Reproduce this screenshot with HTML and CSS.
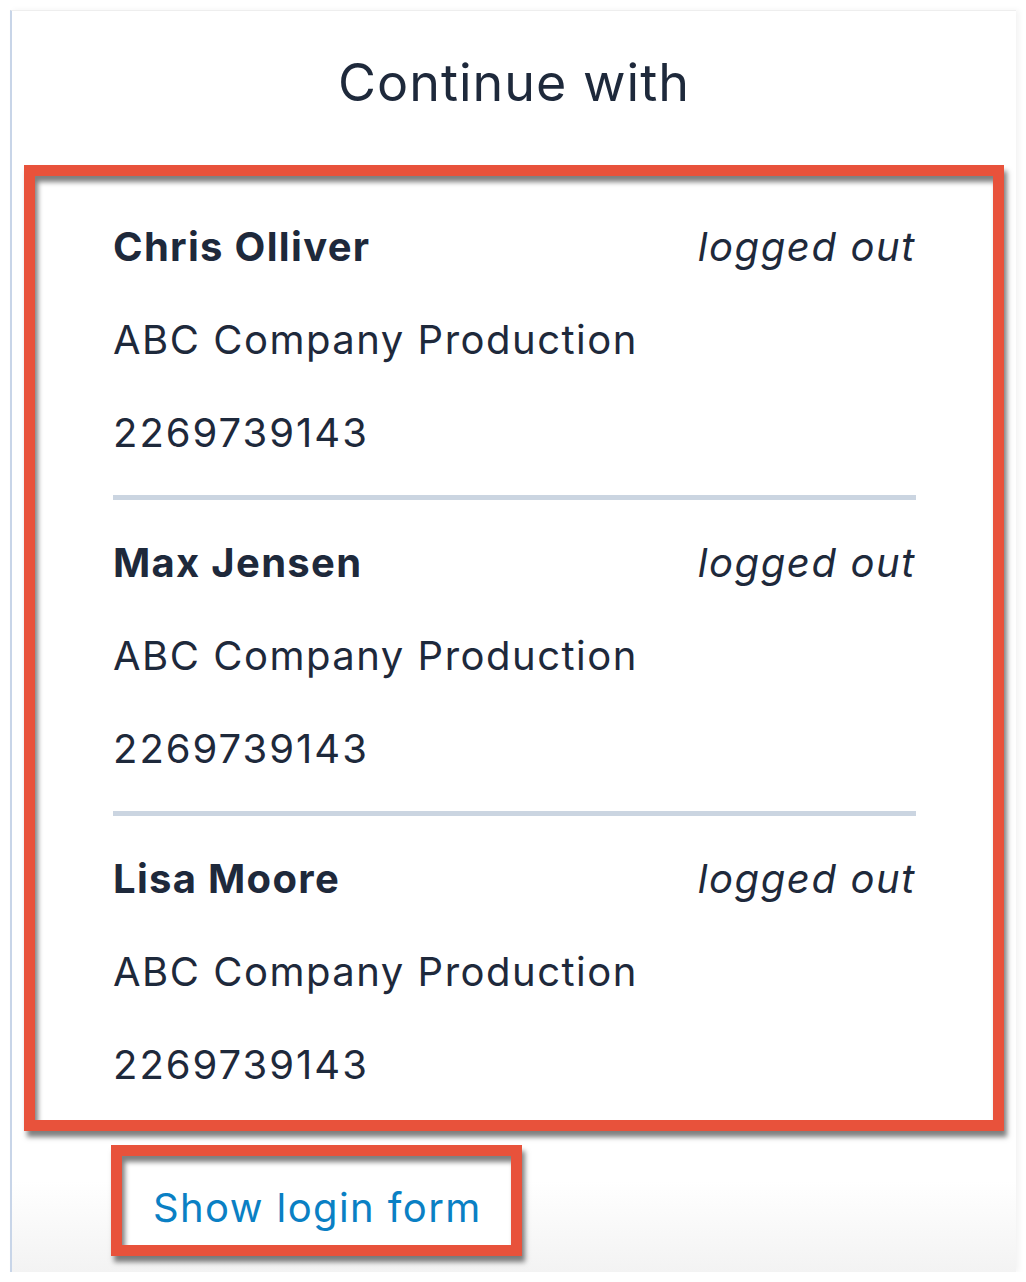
FILE: index.html
```html
<!DOCTYPE html>
<html lang="en">
<head>
<meta charset="utf-8">
<title>Continue with</title>
<link rel="stylesheet" href="styles.css">
</head>
<body>
<div class="card">
  <h1 class="title">Continue with</h1>
  <div class="accounts annot">
    <div class="account">
      <div class="row"><span class="name">Chris Olliver</span><span class="status">logged out</span></div>
      <div class="line">ABC Company Production</div>
      <div class="line phone">2269739143</div>
    </div>
    <div class="account">
      <div class="row"><span class="name">Max Jensen</span><span class="status">logged out</span></div>
      <div class="line">ABC Company Production</div>
      <div class="line phone">2269739143</div>
    </div>
    <div class="account">
      <div class="row"><span class="name">Lisa Moore</span><span class="status">logged out</span></div>
      <div class="line">ABC Company Production</div>
      <div class="line phone">2269739143</div>
    </div>
  </div>
  <div class="login annot">
    <a class="login-link" href="#">Show login form</a>
  </div>
</div>
</body>
</html>
```

FILE: styles.css
```css
html, body {
  margin: 0;
  padding: 0;
  background: #ffffff;
}

body {
  font-family: Inter, "Noto Sans", "Liberation Sans", sans-serif;
  color: #1e293b;
}

.card {
  margin: 10px 10px 0 10px;
  width: 1006px;
  height: 1262px;
  box-sizing: border-box;
  border-left: 2px solid #c8d5e8;
  border-top: 1px solid #eeeeee;
  background: linear-gradient(to bottom, #ffffff 0, #ffffff 1170px, #f3f3f3 100%);
  box-shadow: 3px 0 6px rgba(0, 0, 0, 0.05);
  display: flex;
  flex-direction: column;
  align-items: flex-start;
}

.title {
  align-self: stretch;
  margin: 0;
  padding: 42px 0 52px 0;
  font-size: 52px;
  line-height: 60px;
  font-weight: 400;
  letter-spacing: 1px;
  text-align: center;
  color: #1e293b;
}

.annot {
  border: 11px solid #e8523b;
  box-shadow: 3px 6px 5px rgba(0, 0, 0, 0.5), inset 3px 6px 5px rgba(0, 0, 0, 0.5);
  background: #ffffff;
}

.accounts {
  align-self: stretch;
  margin: 0 12px 0 12px;
  padding: 24px 77px 9px 78px;
}

.account + .account {
  border-top: 5px solid #cbd5e1;
  margin-top: 16px;
  padding-top: 16px;
}

.row {
  display: flex;
  justify-content: space-between;
  align-items: baseline;
  line-height: 93px;
  font-size: 40px;
}

.name {
  font-weight: 700;
  letter-spacing: 1.3px;
}

.status {
  font-style: italic;
  letter-spacing: 1.6px;
}

.line {
  font-size: 40px;
  line-height: 93px;
  letter-spacing: 1.5px;
}

.line.phone {
  letter-spacing: 2px;
}

.login {
  margin: 14px 0 0 99px;
  width: 358px;
  padding: 22px 0 7px 31px;
  box-sizing: content-box;
}

.login-link {
  display: block;
  font-size: 40px;
  line-height: 60px;
  letter-spacing: 1.4px;
  color: #0a80c4;
  text-decoration: none;
  white-space: nowrap;
}
```
